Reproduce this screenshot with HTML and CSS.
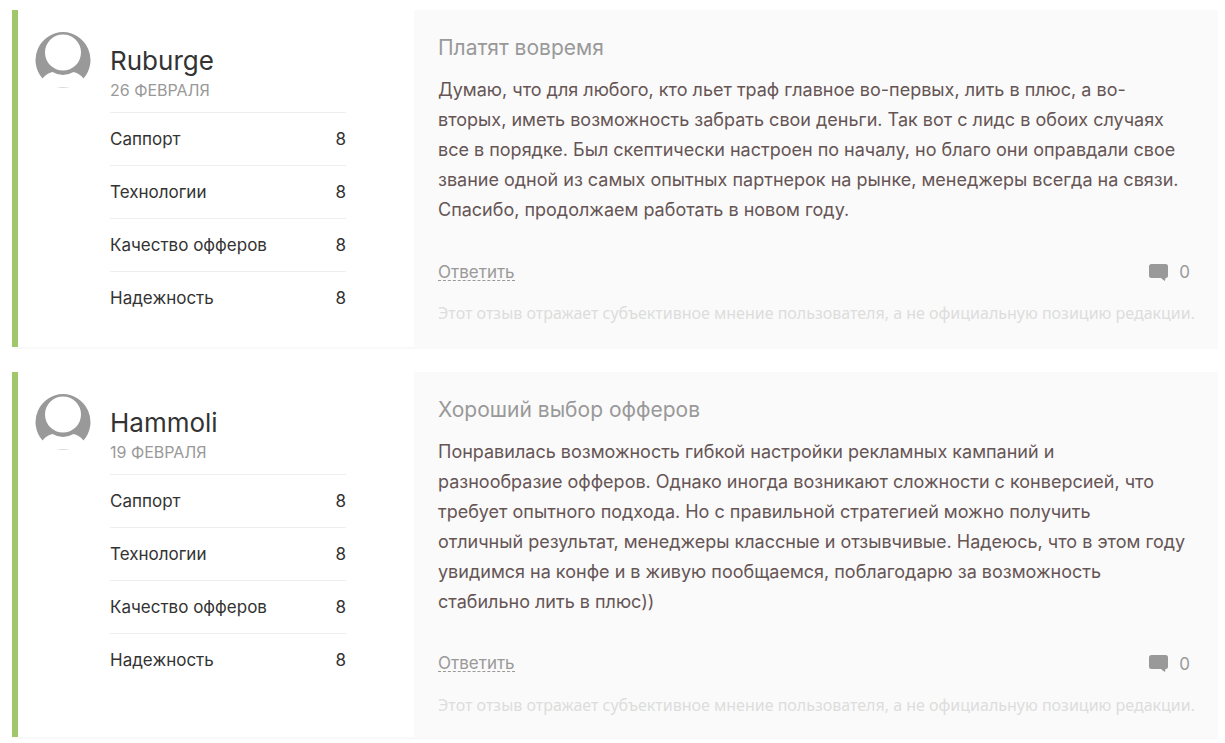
FILE: index.html
```html
<!DOCTYPE html>
<html lang="ru">
<head>
  <meta charset="UTF-8" />
  <meta name="viewport" content="width=device-width, initial-scale=1" />
  <title>Отзывы</title>
  <link rel="stylesheet" href="styles.css">
</head>
<body>
  <main class="reviews">
    <article class="review">
      <div class="review-author">
        <svg class="avatar" viewBox="0 0 56 56" aria-hidden="true">
          <path fill="#999" fill-rule="evenodd" d="M28 0A28 28 0 0 0 7.500 46.500C10 43.500 13 41 17.500 40Q28 46 38.500 40C43 41 46 43.500 48.500 46.500A28 28 0 0 0 28 0ZM28 2.500a18 18 0 1 1 0 36a18 18 0 0 1 0-36Z"/>
          <path fill="#ccc" d="M21 55h14q-7 1.600-14 0Z"/>
        </svg>
        <div class="author-info">
          <h2 class="author-name">Ruburge</h2>
          <time class="review-date" datetime="02-26">26 ФЕВРАЛЯ</time>
          <table class="ratings">
            <tr><th scope="row">Саппорт</th><td>8</td></tr>
            <tr><th scope="row">Технологии</th><td>8</td></tr>
            <tr><th scope="row">Качество офферов</th><td>8</td></tr>
            <tr><th scope="row">Надежность</th><td>8</td></tr>
          </table>
        </div>
      </div>
      <div class="review-body">
        <h3 class="review-title">Платят вовремя</h3>
        <p class="review-text">Думаю, что для любого, кто льет траф главное во-первых, лить в плюс, а во-<br>вторых, иметь возможность забрать свои деньги. Так вот с лидс в обоих случаях<br>все в порядке. Был скептически настроен по началу, но благо они оправдали свое<br>звание одной из самых опытных партнерок на рынке, менеджеры всегда на связи.<br>Спасибо, продолжаем работать в новом году.</p>
        <div class="review-actions">
          <a class="reply" href="#">Ответить</a>
          <span class="comments">
            <svg class="comment-icon" viewBox="0 0 19 17" aria-hidden="true">
              <path d="M2.500 0h14A2.500 2.500 0 0 1 19 2.500v9a2.500 2.500 0 0 1-2.500 2.500H16.500L16 17q-2-1-4-3H2.500A2.500 2.500 0 0 1 0 11.500v-9A2.500 2.500 0 0 1 2.500 0Z"/>
            </svg>
            0
          </span>
        </div>
        <p class="disclaimer">Этот отзыв отражает субъективное мнение пользователя, а не официальную позицию редакции.</p>
      </div>
    </article>

    <article class="review">
      <div class="review-author">
        <svg class="avatar" viewBox="0 0 56 56" aria-hidden="true">
          <path fill="#999" fill-rule="evenodd" d="M28 0A28 28 0 0 0 7.500 46.500C10 43.500 13 41 17.500 40Q28 46 38.500 40C43 41 46 43.500 48.500 46.500A28 28 0 0 0 28 0ZM28 2.500a18 18 0 1 1 0 36a18 18 0 0 1 0-36Z"/>
          <path fill="#ccc" d="M21 55h14q-7 1.600-14 0Z"/>
        </svg>
        <div class="author-info">
          <h2 class="author-name">Hammoli</h2>
          <time class="review-date" datetime="02-19">19 ФЕВРАЛЯ</time>
          <table class="ratings">
            <tr><th scope="row">Саппорт</th><td>8</td></tr>
            <tr><th scope="row">Технологии</th><td>8</td></tr>
            <tr><th scope="row">Качество офферов</th><td>8</td></tr>
            <tr><th scope="row">Надежность</th><td>8</td></tr>
          </table>
        </div>
      </div>
      <div class="review-body">
        <h3 class="review-title">Хороший выбор офферов</h3>
        <p class="review-text">Понравилась возможность гибкой настройки рекламных кампаний и<br>разнообразие офферов. Однако иногда возникают сложности с конверсией, что<br>требует опытного подхода. Но с правильной стратегией можно получить<br>отличный результат, менеджеры классные и отзывчивые. Надеюсь, что в этом году<br>увидимся на конфе и в живую пообщаемся, поблагодарю за возможность<br>стабильно лить в плюс))</p>
        <div class="review-actions">
          <a class="reply" href="#">Ответить</a>
          <span class="comments">
            <svg class="comment-icon" viewBox="0 0 19 17" aria-hidden="true">
              <path d="M2.500 0h14A2.500 2.500 0 0 1 19 2.500v9a2.500 2.500 0 0 1-2.500 2.500H16.500L16 17q-2-1-4-3H2.500A2.500 2.500 0 0 1 0 11.500v-9A2.500 2.500 0 0 1 2.500 0Z"/>
            </svg>
            0
          </span>
        </div>
        <p class="disclaimer">Этот отзыв отражает субъективное мнение пользователя, а не официальную позицию редакции.</p>
      </div>
    </article>
  </main>
</body>
</html>
```

FILE: styles.css
```css
* {
  box-sizing: border-box;
  margin: 0;
  padding: 0;
}
body {
  background: #fff;
  color: #333;
  font-family: Inter, "Noto Sans", sans-serif;
  font-size: 16px;
}
.reviews {
  display: flex;
  flex-direction: column;
  gap: 23px;
  padding: 10px 7px 4px 12px;
}
.review {
  display: grid;
  grid-template-columns: minmax(0, 1fr) minmax(0, 2fr);
  border-bottom: 2px solid #f9f9f9;
}

/* Author column */
.review-author {
  display: flex;
  align-items: flex-start;
  gap: 19px;
  padding: 22px 68px 22px 17px;
  border-left: 6px solid #a1c76b;
}
.avatar {
  width: 56px;
  height: 56px;
  flex-shrink: 0;
}
.author-info {
  flex: 1;
  padding-top: 12px;
}
.author-name {
  font-size: 26px;
  font-weight: 400;
  line-height: 34px;
}
.review-date {
  display: block;
  color: #999;
  font-size: 16px;
  line-height: 24px;
  margin-bottom: 10px;
}
.ratings {
  width: 100%;
  border-collapse: collapse;
  font-size: 17px;
}
.ratings th,
.ratings td {
  height: 53px;
  border-top: 1px solid #eee;
  font-weight: 400;
  text-align: left;
}
.ratings td {
  text-align: right;
}

/* Review column */
.review-body {
  background: #fafafa;
  padding: 22px 28px 20px 24px;
}
.review-title {
  color: #999;
  font-size: 21px;
  font-weight: 400;
  line-height: 32px;
  margin-bottom: 11px;
}
.review-text {
  color: #655;
  font-size: 18px;
  line-height: 30px;
  white-space: nowrap;
}
.review-actions {
  display: flex;
  justify-content: space-between;
  align-items: center;
  height: 30px;
  margin: 32px 0 16px;
  color: #999;
  font-size: 17px;
}
.reply {
  color: #999;
  line-height: 16px;
  text-decoration: none;
  border-bottom: 1px dashed #999;
}
.comments {
  display: flex;
  align-items: center;
  gap: 11px;
}
.comment-icon {
  width: 19px;
  height: 17px;
  fill: #999;
}
.disclaimer {
  color: #ddd;
  font-family: "Noto Sans", sans-serif;
  font-size: 16px;
  line-height: 20px;
  padding-bottom: 2px;
  white-space: nowrap;
}
```
